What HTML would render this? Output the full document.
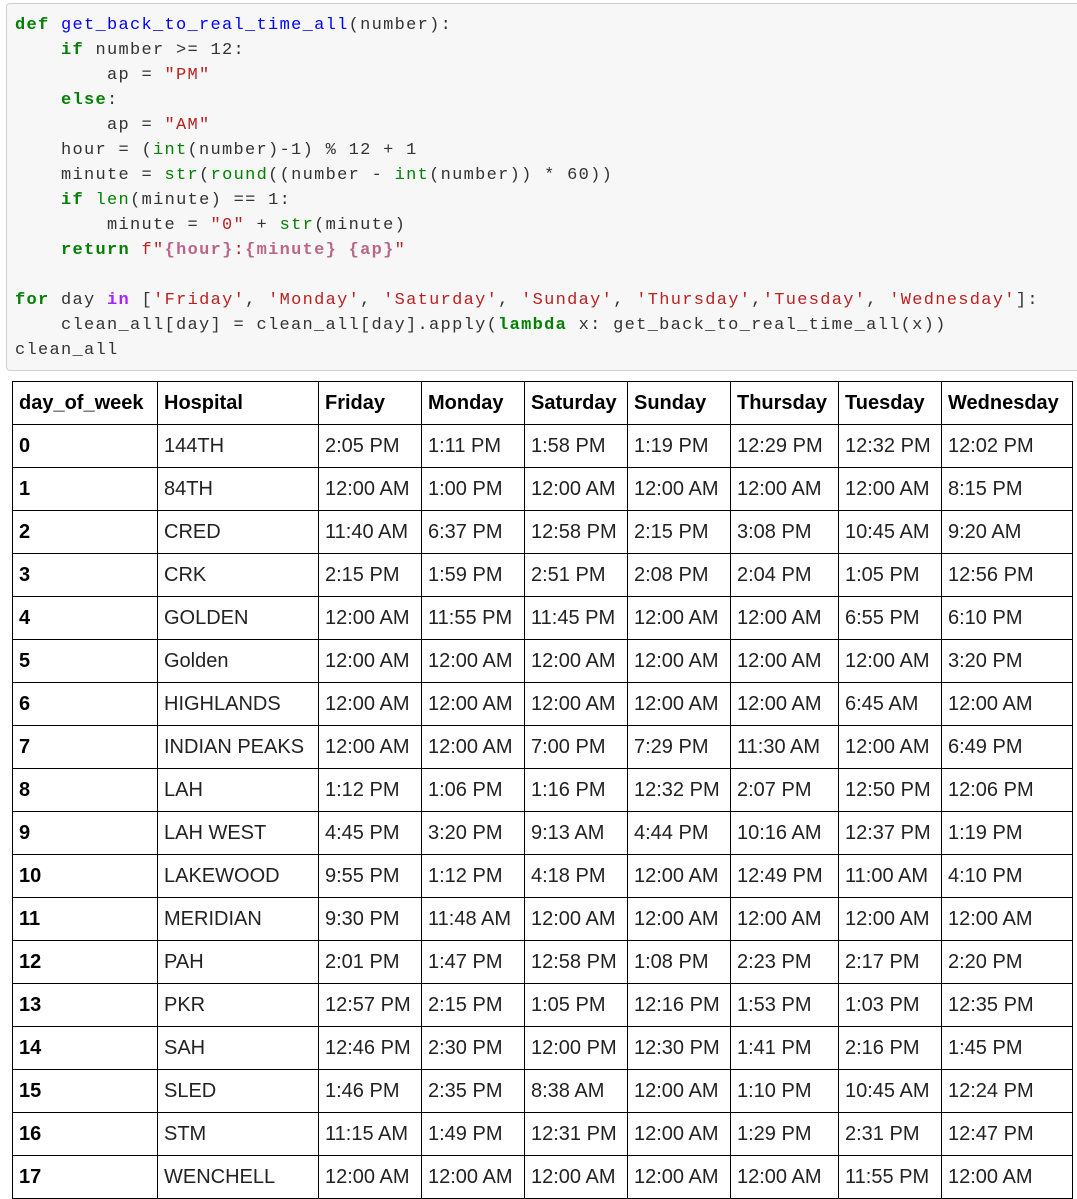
<!DOCTYPE html>
<html><head><meta charset="utf-8"><style>
body{margin:0;width:1077px;height:1197px;overflow:hidden;background:#fff;position:relative}
.code{position:absolute;left:6px;top:3px;width:1090px;height:368px;background:#f7f7f7;border:1px solid #cfcfcf;border-radius:4px;box-sizing:border-box}
pre{margin:0;position:absolute;left:15px;top:13px;font-family:"Liberation Mono",monospace;font-size:17px;letter-spacing:1.3px;line-height:25px;color:#333}
.k{color:#008000;font-weight:bold}.f{color:#0000ff}.s{color:#ba2121}.b{color:#008000}.o{color:#aa22ff;font-weight:bold}.i{color:#bb6688;font-weight:bold}
table{position:absolute;left:12px;top:381px;border-collapse:collapse;font-family:"Liberation Sans",Arial,sans-serif;font-size:20px;color:#222;table-layout:fixed}
td,th{border:1px solid #000;height:43px;padding:0 0 0 6px;text-align:left;white-space:nowrap;overflow:hidden;box-sizing:border-box}
th{font-weight:bold;color:#000}
td:first-child{font-weight:bold;color:#000}
</style></head><body>
<div class="code"></div>
<pre><span class="k">def</span> <span class="f">get_back_to_real_time_all</span>(number):
    <span class="k">if</span> number &gt;= 12:
        ap = <span class="s">"PM"</span>
    <span class="k">else</span>:
        ap = <span class="s">"AM"</span>
    hour = (<span class="b">int</span>(number)-1) % 12 + 1
    minute = <span class="b">str</span>(<span class="b">round</span>((number - <span class="b">int</span>(number)) * 60))
    <span class="k">if</span> <span class="b">len</span>(minute) == 1:
        minute = <span class="s">"0"</span> + <span class="b">str</span>(minute)
    <span class="k">return</span> <span class="s">f"</span><span class="i">{hour}</span><span class="s">:</span><span class="i">{minute}</span> <span class="i">{ap}</span><span class="s">"</span>

<span class="k">for</span> day <span class="o">in</span> [<span class="s">'Friday'</span>, <span class="s">'Monday'</span>, <span class="s">'Saturday'</span>, <span class="s">'Sunday'</span>, <span class="s">'Thursday'</span>,<span class="s">'Tuesday'</span>, <span class="s">'Wednesday'</span>]:
    clean_all[day] = clean_all[day].apply(<span class="k">lambda</span> x: get_back_to_real_time_all(x))
clean_all</pre>
<table>
<colgroup><col style="width:145px"><col style="width:161px"><col style="width:103px"><col style="width:103px"><col style="width:103px"><col style="width:103px"><col style="width:108px"><col style="width:103px"><col style="width:131px"></colgroup>
<tr><th>day_of_week</th><th>Hospital</th><th>Friday</th><th>Monday</th><th>Saturday</th><th>Sunday</th><th>Thursday</th><th>Tuesday</th><th>Wednesday</th></tr>
<tr><td>0</td><td>144TH</td><td>2:05 PM</td><td>1:11 PM</td><td>1:58 PM</td><td>1:19 PM</td><td>12:29 PM</td><td>12:32 PM</td><td>12:02 PM</td></tr>
<tr><td>1</td><td>84TH</td><td>12:00 AM</td><td>1:00 PM</td><td>12:00 AM</td><td>12:00 AM</td><td>12:00 AM</td><td>12:00 AM</td><td>8:15 PM</td></tr>
<tr><td>2</td><td>CRED</td><td>11:40 AM</td><td>6:37 PM</td><td>12:58 PM</td><td>2:15 PM</td><td>3:08 PM</td><td>10:45 AM</td><td>9:20 AM</td></tr>
<tr><td>3</td><td>CRK</td><td>2:15 PM</td><td>1:59 PM</td><td>2:51 PM</td><td>2:08 PM</td><td>2:04 PM</td><td>1:05 PM</td><td>12:56 PM</td></tr>
<tr><td>4</td><td>GOLDEN</td><td>12:00 AM</td><td>11:55 PM</td><td>11:45 PM</td><td>12:00 AM</td><td>12:00 AM</td><td>6:55 PM</td><td>6:10 PM</td></tr>
<tr><td>5</td><td>Golden</td><td>12:00 AM</td><td>12:00 AM</td><td>12:00 AM</td><td>12:00 AM</td><td>12:00 AM</td><td>12:00 AM</td><td>3:20 PM</td></tr>
<tr><td>6</td><td>HIGHLANDS</td><td>12:00 AM</td><td>12:00 AM</td><td>12:00 AM</td><td>12:00 AM</td><td>12:00 AM</td><td>6:45 AM</td><td>12:00 AM</td></tr>
<tr><td>7</td><td>INDIAN PEAKS</td><td>12:00 AM</td><td>12:00 AM</td><td>7:00 PM</td><td>7:29 PM</td><td>11:30 AM</td><td>12:00 AM</td><td>6:49 PM</td></tr>
<tr><td>8</td><td>LAH</td><td>1:12 PM</td><td>1:06 PM</td><td>1:16 PM</td><td>12:32 PM</td><td>2:07 PM</td><td>12:50 PM</td><td>12:06 PM</td></tr>
<tr><td>9</td><td>LAH WEST</td><td>4:45 PM</td><td>3:20 PM</td><td>9:13 AM</td><td>4:44 PM</td><td>10:16 AM</td><td>12:37 PM</td><td>1:19 PM</td></tr>
<tr><td>10</td><td>LAKEWOOD</td><td>9:55 PM</td><td>1:12 PM</td><td>4:18 PM</td><td>12:00 AM</td><td>12:49 PM</td><td>11:00 AM</td><td>4:10 PM</td></tr>
<tr><td>11</td><td>MERIDIAN</td><td>9:30 PM</td><td>11:48 AM</td><td>12:00 AM</td><td>12:00 AM</td><td>12:00 AM</td><td>12:00 AM</td><td>12:00 AM</td></tr>
<tr><td>12</td><td>PAH</td><td>2:01 PM</td><td>1:47 PM</td><td>12:58 PM</td><td>1:08 PM</td><td>2:23 PM</td><td>2:17 PM</td><td>2:20 PM</td></tr>
<tr><td>13</td><td>PKR</td><td>12:57 PM</td><td>2:15 PM</td><td>1:05 PM</td><td>12:16 PM</td><td>1:53 PM</td><td>1:03 PM</td><td>12:35 PM</td></tr>
<tr><td>14</td><td>SAH</td><td>12:46 PM</td><td>2:30 PM</td><td>12:00 PM</td><td>12:30 PM</td><td>1:41 PM</td><td>2:16 PM</td><td>1:45 PM</td></tr>
<tr><td>15</td><td>SLED</td><td>1:46 PM</td><td>2:35 PM</td><td>8:38 AM</td><td>12:00 AM</td><td>1:10 PM</td><td>10:45 AM</td><td>12:24 PM</td></tr>
<tr><td>16</td><td>STM</td><td>11:15 AM</td><td>1:49 PM</td><td>12:31 PM</td><td>12:00 AM</td><td>1:29 PM</td><td>2:31 PM</td><td>12:47 PM</td></tr>
<tr><td>17</td><td>WENCHELL</td><td>12:00 AM</td><td>12:00 AM</td><td>12:00 AM</td><td>12:00 AM</td><td>12:00 AM</td><td>11:55 PM</td><td>12:00 AM</td></tr>
</table>
</body></html>
